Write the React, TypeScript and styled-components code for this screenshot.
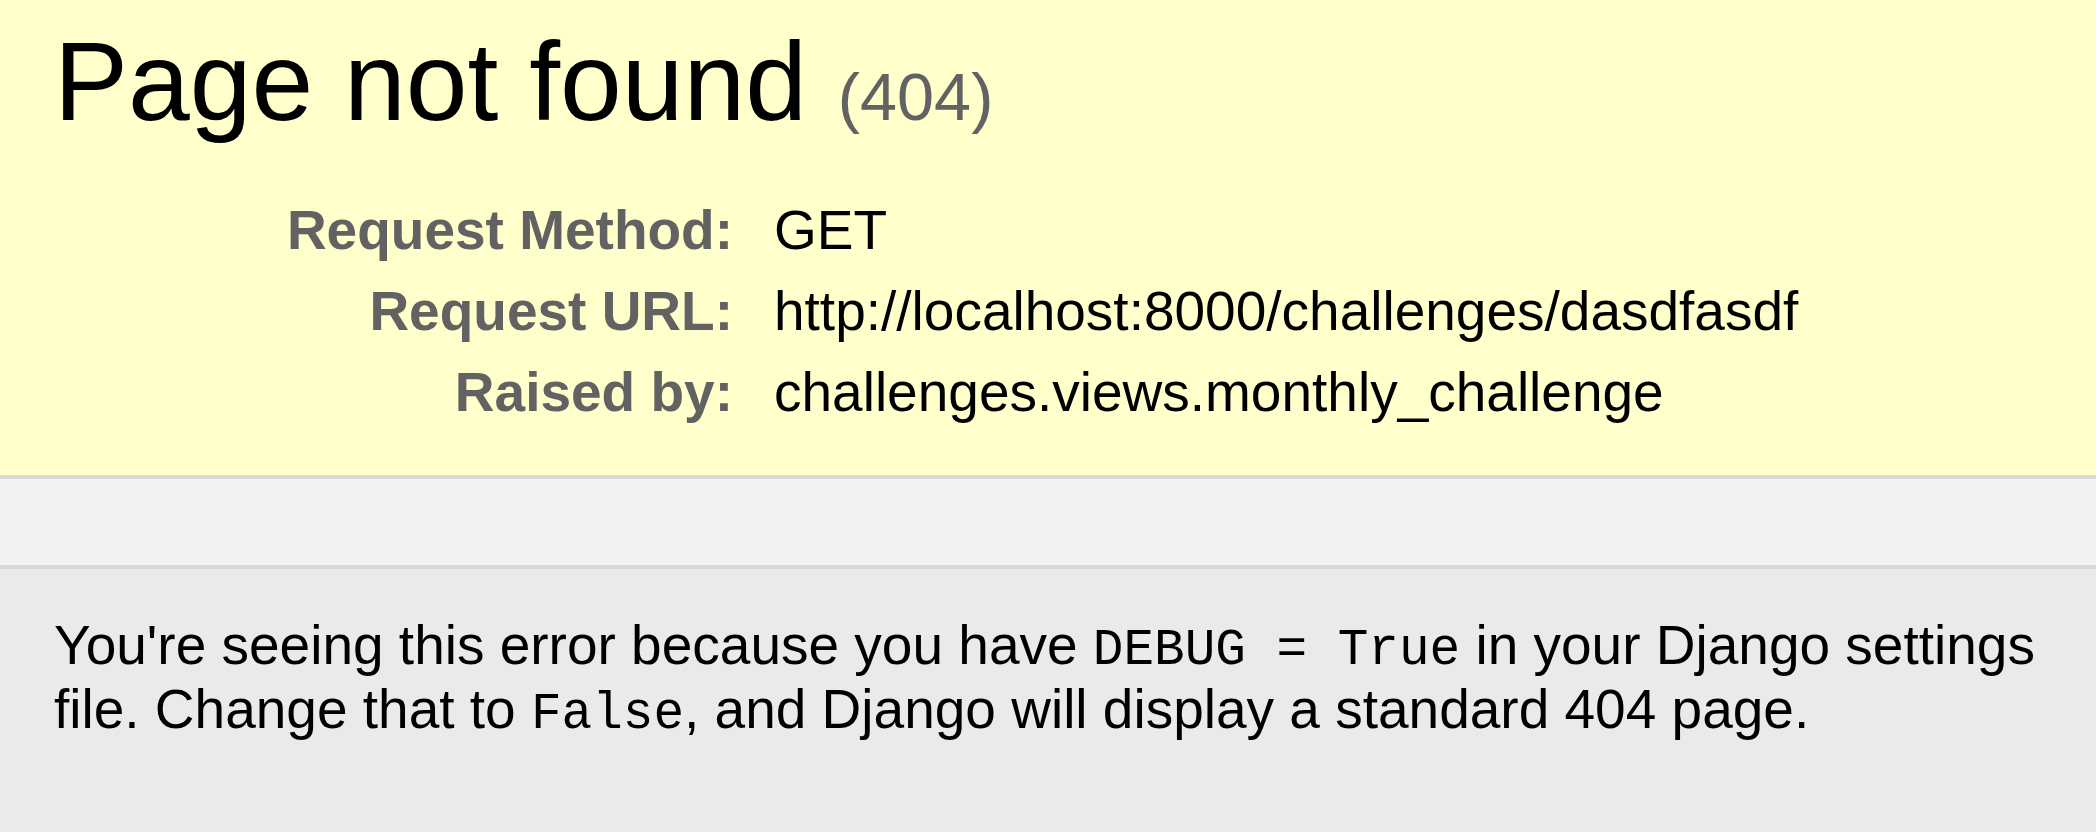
import styled, { createGlobalStyle } from "styled-components";

const GlobalStyle = createGlobalStyle`
	html,
	body {
		margin: 0;
		padding: 0;
	}

	body {
		background: #eaeaea;
		color: #000;
		font-family: "Liberation Sans", Arial, Helvetica, sans-serif;
	}
`;

const meta = [
	{ label: "Request Method:", value: "GET" },
	{ label: "Request URL:", value: "http://localhost:8000/challenges/dasdfasdf" },
	{ label: "Raised by:", value: "challenges.views.monthly_challenge" },
];

const App = () => {
	return (
		<>
			<GlobalStyle />
			<Summary>
				<Title>
					Page not found <Status>(404)</Status>
				</Title>
				<MetaTable>
					{meta.map((row) => (
						<MetaRow key={row.label}>
							<MetaLabel>{row.label}</MetaLabel>
							<MetaValue>{row.value}</MetaValue>
						</MetaRow>
					))}
				</MetaTable>
			</Summary>
			<Info />
			<Explanation>
				<Text>
					You're seeing this error because you have <Code>DEBUG = True</Code> in
					your Django settings file. Change that to <Code>False</Code>, and
					Django will display a standard 404 page.
				</Text>
			</Explanation>
		</>
	);
};

const Summary = styled.div`
	background: #ffffcc;
	border-bottom: 4px solid #d9d9d9;
	padding: 18px 0 42px 54px;
`;

const Title = styled.h1`
	margin: 0 0 44px;
	font-size: 111px;
	line-height: 128px;
	font-weight: normal;
	white-space: nowrap;
`;

const Status = styled.span`
	font-size: 60%;
	line-height: 1;
	color: #626262;
`;

const MetaTable = styled.div`
	display: grid;
	grid-template-columns: 706px 1fr;
`;

const MetaRow = styled.div`
	display: contents;
`;

const MetaLabel = styled.div`
	text-align: right;
	padding: 9px 27px 9px 0;
	font-size: 55px;
	line-height: 63px;
	font-weight: bold;
	color: #626262;
`;

const MetaValue = styled.div`
	padding: 9px 0 9px 14px;
	font-size: 55px;
	line-height: 63px;
	white-space: nowrap;
`;

const Info = styled.div`
	background: #f3f3f3;
	border-bottom: 4px solid #d9d9d9;
	height: 86px;
`;

const Explanation = styled.div`
	padding: 44px 24px 40px 54px;
`;

const Text = styled.p`
	margin: 0;
	font-size: 55px;
	line-height: 64px;
`;

const Code = styled.code`
	font-family: "Liberation Mono", "Courier New", monospace;
	font-size: 51px;
	line-height: 1;
`;

export default App;
